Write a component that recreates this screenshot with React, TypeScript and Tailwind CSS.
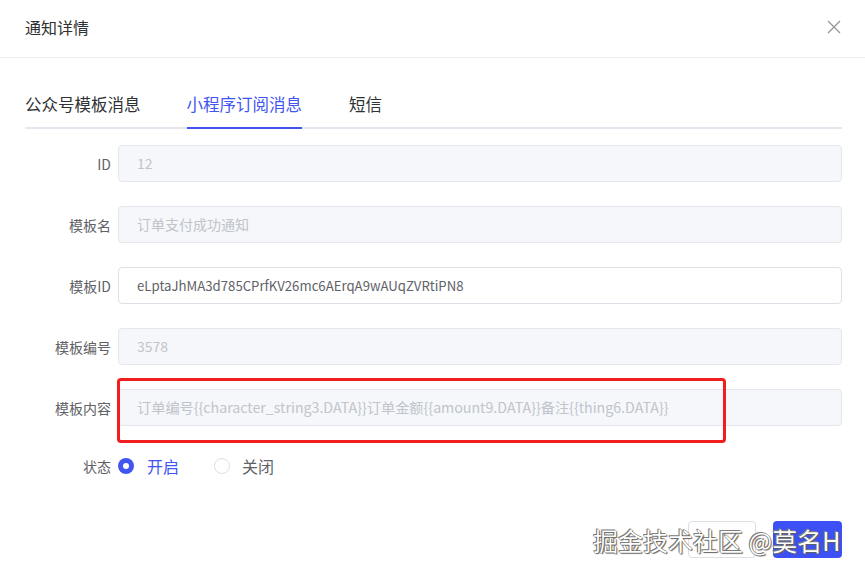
import React from "react";

const font = { fontFamily: '"Noto Sans CJK SC", "Noto Sans", sans-serif' };

function Row({
  label,
  value,
  disabled = true,
  size = "text-[14px]",
}: {
  label: string;
  value: string;
  disabled?: boolean;
  size?: string;
}) {
  return (
    <div className="flex items-center h-[37px]">
      <div className="w-[118px] shrink-0 text-right text-[14px] text-[#606266] pr-[7px] leading-none">{label}</div>
      <div
        className={
          "flex-1 h-[37px] flex items-center px-[18px] rounded-[4px] border whitespace-nowrap " +
          size +
          " " +
          (disabled ? "bg-[#f5f7fa] border-[#e4e7ed] text-[#c0c4cc]" : "bg-white border-[#dcdfe6] text-[#606266]")
        }
      >
        {value}
      </div>
    </div>
  );
}

export default function App() {
  return (
    <div className="w-[865px] h-[571px] bg-white relative overflow-hidden" style={font}>
      {/* Header */}
      <div className="h-[58px] flex items-center justify-between pl-[25px] pr-[24px] pb-[3px] border-b border-[#f0f0f0]">
        <span className="text-[16px] text-[#303133]">通知详情</span>
        <svg width="14" height="14" viewBox="0 0 14 14" className="text-[#909399]">
          <path d="M1 1L13 13M13 1L1 13" stroke="currentColor" strokeWidth="1.2" />
        </svg>
      </div>

      {/* Tabs */}
      <div className="ml-[25px] mr-[23px] mt-[23px] flex border-b-2 border-[#e4e7ed] h-[48px]">
        <div className="text-[16.5px] text-[#303133] pt-[11px]">公众号模板消息</div>
        <div className="ml-[46px] text-[16.5px] text-[#4155f0] pt-[11px] border-b-2 border-[#4155f0] -mb-[2px]">小程序订阅消息</div>
        <div className="ml-[47px] text-[16.5px] text-[#303133] pt-[11px]">短信</div>
      </div>

      {/* Form */}
      <div className="flex flex-col gap-[24px] pr-[23px] mt-[16px]">
        <Row label="ID" value="12" />
        <Row label="模板名" value="订单支付成功通知" />
        <Row label="模板ID" value="eLptaJhMA3d785CPrfKV26mc6AErqA9wAUqZVRtiPN8" disabled={false} size="text-[13.2px]" />
        <Row label="模板编号" value="3578" />
        <div className="relative">
          <Row label="模板内容" value="订单编号{{character_string3.DATA}}订单金额{{amount9.DATA}}备注{{thing6.DATA}}" size="text-[14.2px]" />
          <div className="absolute left-[117px] top-[-11px] w-[609px] h-[65px] border-[3px] border-[#f01e1e] rounded-[4px]" />
        </div>
        <div className="flex items-center h-[30px] mt-[1px]">
          <div className="w-[118px] shrink-0 text-right text-[14px] text-[#606266] pr-[7px]">状态</div>
          <span className="w-[16px] h-[16px] rounded-full bg-[#4155f0] flex items-center justify-center">
            <span className="w-[6px] h-[6px] rounded-full bg-white" />
          </span>
          <span className="ml-[13px] text-[16px] text-[#4155f0]">开启</span>
          <span className="ml-[35px] w-[16px] h-[16px] rounded-full border border-[#dcdfe6] bg-white" />
          <span className="ml-[12px] text-[16px] text-[#606266]">关闭</span>
        </div>
      </div>

      {/* Footer buttons */}
      <div className="absolute right-[23px] top-[521px] flex gap-[17px]">
        <div className="w-[68px] h-[37px] rounded-[4px] border border-[#dcdfe6] bg-white" />
        <div className="w-[69px] h-[37px] rounded-[4px] bg-[#3d50f5]" />
      </div>

      {/* Watermark */}
      <div
        className="absolute left-[593px] top-[522px] text-[25px] text-white leading-[36px] whitespace-nowrap"
        style={{ textShadow: "0 0 1px #333, 1px 1px 1px #666, -1px -1px 0 #888" }}
      >
        掘金技术社区 @莫名H
      </div>
    </div>
  );
}
